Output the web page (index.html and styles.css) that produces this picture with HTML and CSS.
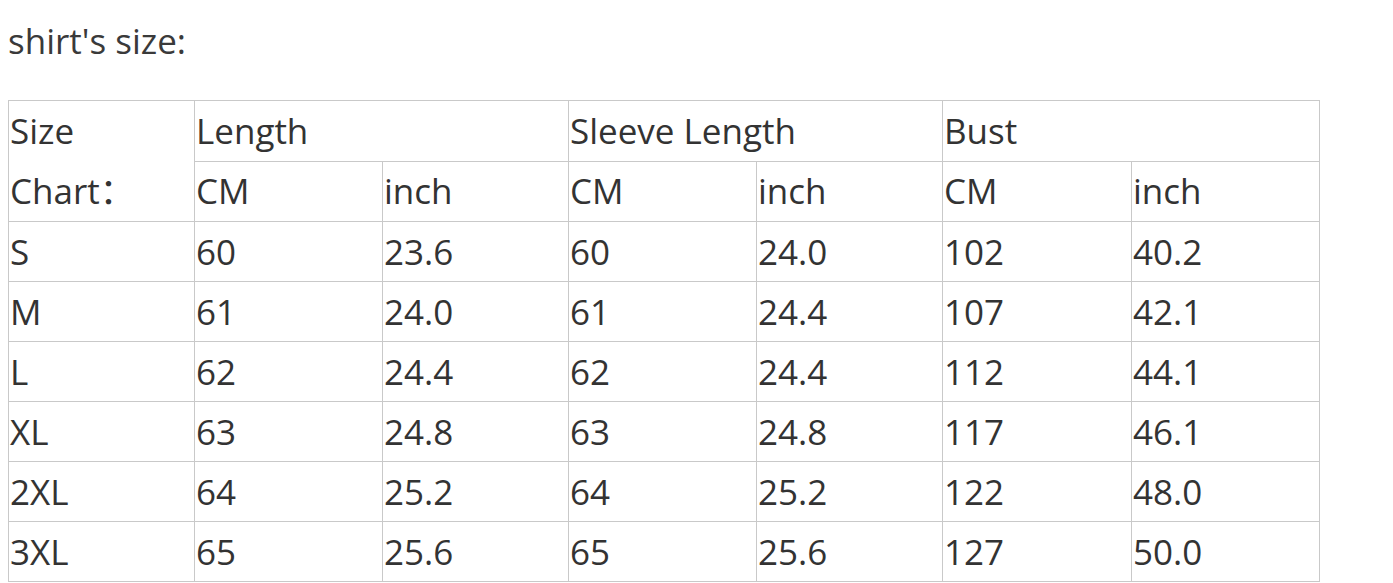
FILE: index.html
```html
<!DOCTYPE html>
<html>
<head>
<meta charset="utf-8">
<link rel="stylesheet" href="styles.css">
</head>
<body>
<p class="title">shirt's size:</p>
<table class="chart">
  <colgroup>
    <col class="narrow"><col class="wide"><col class="narrow"><col class="wide"><col class="narrow"><col class="wider"><col class="wide">
  </colgroup>
  <tr><td rowspan="2" class="label">Size Chart：</td><td colspan="2">Length</td><td colspan="2">Sleeve Length</td><td colspan="2">Bust</td></tr>
  <tr><td>CM</td><td>inch</td><td>CM</td><td>inch</td><td>CM</td><td>inch</td></tr>
  <tr><td>S</td><td>60</td><td>23.6</td><td>60</td><td>24.0</td><td>102</td><td>40.2</td></tr>
  <tr><td>M</td><td>61</td><td>24.0</td><td>61</td><td>24.4</td><td>107</td><td>42.1</td></tr>
  <tr><td>L</td><td>62</td><td>24.4</td><td>62</td><td>24.4</td><td>112</td><td>44.1</td></tr>
  <tr><td>XL</td><td>63</td><td>24.8</td><td>63</td><td>24.8</td><td>117</td><td>46.1</td></tr>
  <tr><td>2XL</td><td>64</td><td>25.2</td><td>64</td><td>25.2</td><td>122</td><td>48.0</td></tr>
  <tr><td>3XL</td><td>65</td><td>25.6</td><td>65</td><td>25.6</td><td>127</td><td>50.0</td></tr>
</table>
</body>
</html>
```
FILE: styles.css
```css
html, body {
  margin: 0;
  padding: 0;
  background: #ffffff;
}
body {
  padding: 0 8px;
  font-family: "Open Sans", "Noto Sans CJK SC", sans-serif;
  color: #333333;
}
.title {
  margin: 0;
  padding-top: 19px;
  font-size: 35px;
  line-height: 44px;
  height: 81px;
  color: #3a3a3a;
}
.chart {
  border-collapse: collapse;
  table-layout: fixed;
  width: 1311px;
  font-size: 35px;
}
.chart col.narrow {
  width: 186px;
}
.chart col.wide {
  width: 188px;
}
.chart col.wider {
  width: 189px;
}
.chart td {
  border: 1px solid #c9c9c9;
  height: 59px;
  padding: 0 1px;
  line-height: 58px;
  vertical-align: middle;
  white-space: normal;
  overflow: hidden;
}
.chart td.label {
  line-height: 60px;
}
```
